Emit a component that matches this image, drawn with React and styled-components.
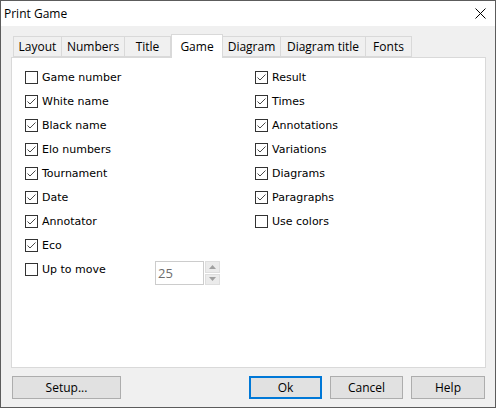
import React from 'react';
import styled, { createGlobalStyle } from 'styled-components';

const GlobalStyle = createGlobalStyle`
  body {
    margin: 0;
    background: #ffffff;
  }
`;

const uiFont = `"Segoe UI", "Open Sans", "Noto Sans", sans-serif`;

const Window = styled.div`
  box-sizing: border-box;
  width: 496px;
  height: 408px;
  border: 1px solid #5c5c5c;
  display: flex;
  flex-direction: column;
  background: #f0f0f0;
  font-family: ${uiFont};
  font-size: 12px;
  color: #000;
`;

const TitleBar = styled.div`
  height: 25px;
  background: #ffffff;
  display: flex;
  align-items: center;
  justify-content: space-between;
  padding: 0 9px 0 3px;
`;

const TitleText = styled.span`
  font-size: 12px;
  line-height: 25px;
`;

const Body = styled.div`
  flex: 1;
  display: flex;
  flex-direction: column;
  padding: 8px 9px 8px 10px;
`;

const TabStrip = styled.div`
  display: flex;
  align-items: flex-end;
  height: 23px;
  padding-left: 2px;
  position: relative;
  z-index: 1;
`;

const Tab = styled.div`
  box-sizing: border-box;
  width: ${({ $w }) => $w}px;
  height: ${({ $active }) => ($active ? 24 : 21)}px;
  margin-left: ${({ $first, $active }) => ($first || $active ? 0 : -1)}px;
  margin-bottom: ${({ $active }) => ($active ? -1 : 0)}px;
  border: 1px solid #d9d9d9;
  border-bottom: ${({ $active }) => ($active ? 'none' : '1px solid #d9d9d9')};
  background: ${({ $active }) => ($active ? '#ffffff' : '#f0f0f0')};
  display: flex;
  align-items: center;
  justify-content: center;
  font-size: 12px;
  white-space: nowrap;
`;

const Panel = styled.div`
  box-sizing: border-box;
  height: 311px;
  border: 1px solid #d9d9d9;
  background: #ffffff;
  display: grid;
  grid-template-columns: 230px 1fr;
  align-content: start;
  padding: 7px 0 0 13px;
`;

const Column = styled.div`
  display: flex;
  flex-direction: column;
`;

const Row = styled.div`
  height: 24px;
  display: flex;
  align-items: center;
`;

const Label = styled.label`
  display: flex;
  align-items: center;
  gap: 4px;
  font-family: "DejaVu Sans", Verdana, sans-serif;
  font-size: 11px;
  width: ${({ $w }) => ($w ? `${$w}px` : 'auto')};
  align-self: flex-start;
  height: 24px;
`;

const Box = styled.span`
  box-sizing: border-box;
  width: 13px;
  height: 13px;
  border: 1px solid #333333;
  background: #ffffff;
  display: inline-flex;
  flex-shrink: 0;
`;

const Spin = styled.div`
  display: flex;
  align-self: flex-start;
  margin-top: 4px;
`;

const SpinEdit = styled.div`
  box-sizing: border-box;
  width: 49px;
  height: 24px;
  border: 1px solid #cccccc;
  background: #ffffff;
  color: #6d6d6d;
  font-size: 13px;
  display: flex;
  align-items: center;
  padding-left: 2px;
`;

const SpinButtons = styled.div`
  display: flex;
  flex-direction: column;
  gap: 1px;
  margin-left: 1px;
`;

const SpinButton = styled.div`
  box-sizing: border-box;
  width: 15px;
  height: 11.5px;
  background: #ebebeb;
  border: 1px solid #dedede;
  display: flex;
  align-items: center;
  justify-content: center;
`;

const ButtonRow = styled.div`
  display: flex;
  justify-content: space-between;
  margin-top: 8px;
  padding: 0 1px;
`;

const ButtonGroup = styled.div`
  display: flex;
  gap: 8px;
`;

const Button = styled.button`
  box-sizing: border-box;
  width: ${({ $w }) => $w}px;
  height: 23px;
  padding: 0;
  background: #e1e1e1;
  border: ${({ $default }) => ($default ? '2px solid #0078d7' : '1px solid #adadad')};
  font-family: ${uiFont};
  font-size: 12px;
  color: #000;
`;

function Check({ checked }) {
  return (
    <Box>
      {checked && (
        <svg width="11" height="11" viewBox="0 0 11 11">
          <polyline points="1.5,5.5 4,8 9.5,2.5" fill="none" stroke="#4a4a4a" strokeWidth="1" />
        </svg>
      )}
    </Box>
  );
}

function CheckRow({ text, checked, children, labelWidth }) {
  return (
    <Row>
      <Label $w={labelWidth}>
        <Check checked={checked} />
        {text}
      </Label>
      {children}
    </Row>
  );
}

const tabs = [
  { name: 'Layout', w: 49 },
  { name: 'Numbers', w: 64 },
  { name: 'Title', w: 47 },
  { name: 'Game', w: 52, active: true },
  { name: 'Diagram', w: 59 },
  { name: 'Diagram title', w: 86 },
  { name: 'Fonts', w: 47 },
];

const leftOptions = [
  ['Game number', false],
  ['White name', true],
  ['Black name', true],
  ['Elo numbers', true],
  ['Tournament', true],
  ['Date', true],
  ['Annotator', true],
  ['Eco', true],
];

const rightOptions = [
  ['Result', true],
  ['Times', true],
  ['Annotations', true],
  ['Variations', true],
  ['Diagrams', true],
  ['Paragraphs', true],
  ['Use colors', false],
];

export default function App() {
  return (
    <>
      <GlobalStyle />
      <Window>
        <TitleBar>
          <TitleText>Print Game</TitleText>
          <svg width="11" height="11" viewBox="0 0 11 11">
            <path d="M0.5 0.5 L10.5 10.5 M10.5 0.5 L0.5 10.5" stroke="#000" strokeWidth="1" />
          </svg>
        </TitleBar>
        <Body>
          <TabStrip>
            {tabs.map((t, i) => (
              <Tab key={t.name} $w={t.w} $active={t.active} $first={i === 0}>
                {t.name}
              </Tab>
            ))}
          </TabStrip>
          <Panel>
            <Column>
              {leftOptions.map(([text, checked]) => (
                <CheckRow key={text} text={text} checked={checked} />
              ))}
              <CheckRow text="Up to move" checked={false} labelWidth={130}>
                <Spin>
                  <SpinEdit>25</SpinEdit>
                  <SpinButtons>
                    <SpinButton>
                      <svg width="7" height="4" viewBox="0 0 7 4">
                        <path d="M0 4 L3.5 0 L7 4 Z" fill="#a0a0a0" />
                      </svg>
                    </SpinButton>
                    <SpinButton>
                      <svg width="7" height="4" viewBox="0 0 7 4">
                        <path d="M0 0 L3.5 4 L7 0 Z" fill="#a0a0a0" />
                      </svg>
                    </SpinButton>
                  </SpinButtons>
                </Spin>
              </CheckRow>
            </Column>
            <Column>
              {rightOptions.map(([text, checked]) => (
                <CheckRow key={text} text={text} checked={checked} />
              ))}
            </Column>
          </Panel>
          <ButtonRow>
            <Button $w={109}>Setup...</Button>
            <ButtonGroup>
              <Button $w={73} $default>Ok</Button>
              <Button $w={73}>Cancel</Button>
              <Button $w={74}>Help</Button>
            </ButtonGroup>
          </ButtonRow>
        </Body>
      </Window>
    </>
  );
}
